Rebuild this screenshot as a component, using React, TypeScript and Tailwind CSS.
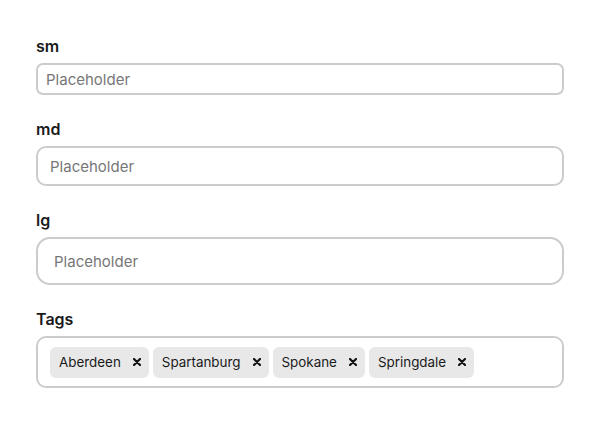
import React from "react";

const font = { fontFamily: "Inter, 'Noto Sans', sans-serif" };

function X() {
  return (
    <svg width="8" height="8" viewBox="0 0 8 8" className="ml-[12px] shrink-0">
      <path d="M1 1L7 7M7 1L1 7" stroke="#111" strokeWidth="2.2" strokeLinecap="round" />
    </svg>
  );
}

function Chip({ label }: { label: string }) {
  return (
    <span className="flex items-center h-[31px] rounded-[6px] bg-[#e8e8e8] pl-[9px] pr-[8px] text-[13.4px] text-[#1a1a1a]">
      {label}
      <X />
    </span>
  );
}

const labelCls = "text-[16px] leading-6 font-semibold text-[#1a1a1a] mb-[5px]";

export default function App() {
  return (
    <div style={font} className="w-[600px] h-[424px] bg-white px-[36px] pt-[34px] flex flex-col gap-[22px]">
      <div className="flex flex-col">
        <label className={labelCls}>sm</label>
        <input
          placeholder="Placeholder"
          className="h-[32px] rounded-[7px] border-2 border-[#cccccc] px-[8px] text-[15px] placeholder:text-[#777] outline-none"
        />
      </div>
      <div className="flex flex-col">
        <label className={labelCls}>md</label>
        <input
          placeholder="Placeholder"
          className="h-[40px] rounded-[10px] border-2 border-[#cccccc] px-[12px] text-[15px] placeholder:text-[#777] outline-none"
        />
      </div>
      <div className="flex flex-col">
        <label className={labelCls}>lg</label>
        <input
          placeholder="Placeholder"
          className="h-[48px] rounded-[14px] border-2 border-[#cccccc] px-[16px] text-[15px] placeholder:text-[#777] outline-none"
        />
      </div>
      <div className="flex flex-col">
        <label className={labelCls}>Tags</label>
        <div className="h-[52px] rounded-[10px] border-2 border-[#cccccc] px-[12px] flex items-center gap-[4px]">
          <Chip label="Aberdeen" />
          <Chip label="Spartanburg" />
          <Chip label="Spokane" />
          <Chip label="Springdale" />
        </div>
      </div>
    </div>
  );
}
